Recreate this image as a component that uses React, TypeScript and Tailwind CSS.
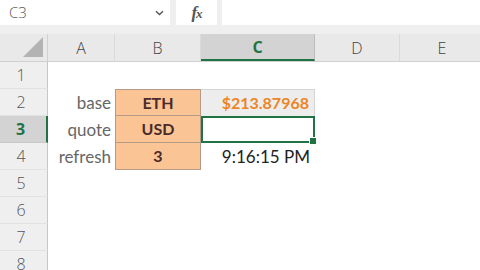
const cols = [
  { name: "A", w: "w-[67px]" },
  { name: "B", w: "w-[86px]" },
  { name: "C", w: "w-[114px]" },
  { name: "D", w: "w-[85px]" },
  { name: "E", w: "w-[85px]" },
];

const rows = [1, 2, 3, 4, 5, 6, 7, 8];

function Cell({ r, c }: { r: number; c: number }) {
  const w = cols[c].w;
  // column A labels
  if (c === 0) {
    const label = r === 2 ? "base" : r === 3 ? "quote" : r === 4 ? "refresh" : "";
    return (
      <div className={`${w} h-full shrink-0 flex items-center justify-end pr-[4px] text-[17px] text-[#666]`}>
        {label}
      </div>
    );
  }
  if (c === 1 && r >= 2 && r <= 4) {
    const v = r === 2 ? "ETH" : r === 3 ? "USD" : "3";
    return (
      <div
        className={`${w} h-full shrink-0 flex items-center justify-center bg-[#fbc495] border-x ${
          r === 2 ? "border-t" : ""
        } border-b border-[#b59a86] text-[16px] font-bold text-[#4a2b2b]`}
      >
        {v}
      </div>
    );
  }
  if (c === 2 && r === 2) {
    return (
      <div className={`${w} h-full shrink-0 flex items-center justify-end pr-[5px] bg-[#ededed] border-t border-r border-[#d4d4d4] text-[16px] font-bold text-[#ec8526]`}>
        $213.87968
      </div>
    );
  }
  if (c === 2 && r === 3) {
    return (
      <div className={`${w} h-full shrink-0 relative border-2 border-[#217346] bg-white`}>
        <div className="absolute -right-[4px] -bottom-[4px] w-[6px] h-[6px] bg-[#217346] border border-white box-content" />
      </div>
    );
  }
  if (c === 2 && r === 4) {
    return (
      <div className={`${w} h-full shrink-0 flex items-center justify-end pr-[5px] text-[17px] text-[#222]`}>
        9:16:15 PM
      </div>
    );
  }
  return <div className={`${w} h-full shrink-0`} />;
}

export default function App() {
  return (
    <div className="w-[480px] h-[270px] overflow-hidden bg-white font-['Lato','Open_Sans',sans-serif] select-none">
      {/* formula bar */}
      <div className="h-[34px] bg-[#efefef] flex items-start">
        <div className="w-[170px] h-[25px] bg-white flex items-center justify-between pl-[9px] pr-[6px] text-[15px] text-[#555] font-['Open_Sans',sans-serif] font-light">
          <span>C3</span>
          <svg width="9" height="6" viewBox="0 0 9 6">
            <path d="M1 1.2 L4.5 4.5 L8 1.2" fill="none" stroke="#555" strokeWidth="1.4" />
          </svg>
        </div>
        <div className="w-[6px]" />
        <div className="w-[41px] h-[25px] bg-white flex items-center justify-center">
          <span className="font-['Liberation_Serif',serif] italic font-bold text-[17px] text-[#555] tracking-[-1px]">
            f<span className="text-[13px]">x</span>
          </span>
        </div>
        <div className="w-[5px]" />
        <div className="flex-1 h-[25px] bg-white" />
      </div>

      {/* column headers */}
      <div className="h-[28px] flex bg-[#e9e9e9] border-b border-[#d0d0d0] font-['Open_Sans',sans-serif]">
        <div className="w-[48px] h-full shrink-0 relative border-r border-[#d0d0d0]">
          <svg width="22" height="22" viewBox="0 0 22 22" className="absolute right-[3px] bottom-[3px]">
            <path d="M21 1 L21 21 L1 21 Z" fill="#b3b3b3" />
          </svg>
        </div>
        {cols.map((col) => {
          const sel = col.name === "C";
          return (
            <div
              key={col.name}
              className={`${col.w} h-full shrink-0 flex items-center justify-center text-[16px] border-r ${
                sel
                  ? "bg-[#d3d3d3] text-[#217346] font-bold border-b-2 border-b-[#217346] border-r-[#bdbdbd]"
                  : "text-[#444] font-light border-[#dadada]"
              }`}
            >
              {col.name}
            </div>
          );
        })}
      </div>

      {/* rows */}
      {rows.map((r) => {
        const sel = r === 3;
        return (
          <div key={r} className="h-[27px] flex">
            <div
              className={`w-[48px] h-full shrink-0 flex items-center justify-center pr-[5px] text-[16px] border-b font-['Open_Sans',sans-serif] ${
                sel
                  ? "bg-[#d3d3d3] text-[#217346] font-bold border-r-2 border-r-[#217346] border-b-[#c8c8c8]"
                  : "bg-[#efefef] text-[#555] font-light border-r border-r-[#c6c6c6] border-b-[#e2e2e2]"
              }`}
            >
              {r}
            </div>
            {cols.map((_, c) => (
              <Cell key={c} r={r} c={c} />
            ))}
          </div>
        );
      })}
    </div>
  );
}
